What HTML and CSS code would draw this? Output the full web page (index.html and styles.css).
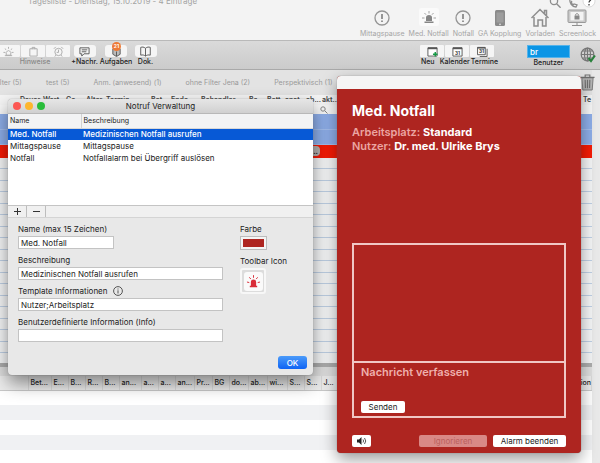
FILE: index.html
```html
<!DOCTYPE html>
<html lang="de">
<head>
<meta charset="utf-8">
<title>Tagesliste</title>
<link rel="stylesheet" href="styles.css">
</head>
<body>
<main class="app">
  <header class="top">
    <div class="top-line">
      <span class="top-title">Tagesliste - Dienstag, 15.10.2019 - 4 Einträge</span>
      <svg class="top-icons" viewBox="0 0 50 12" aria-hidden="true">
        <g fill="none" stroke="#8d8d8d" stroke-width="1.3"><circle cx="8" cy="5" r="3.6"/><path d="M10.6 7.8l4 4"/><path d="M24 2c-1 5 2 9 6 9l1-2-3-1-1 1c-1-1-2-3-1-4"/></g>
        <circle cx="43" cy="5" r="6" fill="#fff" stroke="#c4c4c4" stroke-width=".6"/>
        <path d="M41 3.500c0-3 4-3 4-.5 0 1.500-2 1.500-2 3.500M43 8v1.400" fill="none" stroke="#333" stroke-width="1.200"/>
      </svg>
    </div>
    <nav class="actions">
      <a href="#"><svg viewBox="0 0 20 20"><circle cx="10" cy="10" r="7" fill="none" stroke="#959595" stroke-width="1.300"/><path d="M10 6v5M10 12.500v1.500" stroke="#777" stroke-width="1.500"/></svg>Mittagspause</a>
      <a href="#"><svg viewBox="0 0 20 20"><rect x="0" y="0" width="20" height="18" rx="2" fill="#fafafa"/><path d="M7 13V9.500q0-2.500 3-2.500t3 2.500V13zM5.500 13.500h9v1.500h-9z" fill="#858585"/><path d="M10 3v2.500M5.500 5l1.500 1.700M14.500 5L13 6.700M3 10h2.500M14.500 10H17" stroke="#999" stroke-width=".9"/></svg>Med. Notfall</a>
      <a href="#"><svg viewBox="0 0 20 20"><circle cx="10" cy="10" r="7" fill="none" stroke="#959595" stroke-width="1.300"/><path d="M10 6v5M10 12.500v1.500" stroke="#777" stroke-width="1.500"/></svg>Notfall</a>
      <a href="#"><svg viewBox="0 0 20 20"><rect x="5" y="2" width="10" height="16" rx="1.500" fill="#8a8a8a"/><rect x="6.500" y="4.500" width="7" height="10" fill="#9d9d9d"/><circle cx="10" cy="16.300" r=".9" fill="#ddd"/></svg>GA Kopplung</a>
      <a href="#"><svg viewBox="0 0 20 20"><path d="M1.500 10L10 1.500 18.500 10M4 9v9h4v-6h4.500v6H16V9M14.500 5.500V2.500h2v5" fill="none" stroke="#8f8f8f" stroke-width="1.500"/></svg>Vorladen</a>
      <a href="#"><svg viewBox="0 0 20 20"><rect x="1" y="2" width="18" height="12.500" rx="1" fill="#c9c9c9" stroke="#999"/><rect x="3.500" y="4" width="13" height="8.500" fill="#f3f3f3"/><path d="M7.500 7.500h5v4h-5z" fill="#888"/><path d="M8.500 7.500V6.500q1.500-2 3 0v1M10 14.500v3M5 17.500h10" fill="none" stroke="#8f8f8f"/></svg>Screenlock</a>
    </nav>
  </header>

  <div class="toolbar">
    <div class="tool muted hints">
      <div class="segments">
        <button type="button" aria-label="Alarm"><svg viewBox="0 0 12 12"><path d="M3.500 10V7q2.500-4 5 0v3zM2 10.500h8M6 1v2M2 3l1.500 1M10 3L8.500 4M.5 7h2M9.500 7h2"/></svg></button><button type="button" aria-label="Klemmbrett"><svg viewBox="0 0 12 12"><path d="M2 3h8v8H2zM4.500 3.500v-2h3v2"/></svg></button><button type="button" aria-label="Wecker"><svg viewBox="0 0 12 12"><circle cx="6" cy="6.500" r="4"/><path d="M6 4v3H4M1 3l2-2M11 3L9 1M3 10l-1 1.500M9 10l1 1.500"/></svg></button>
      </div>
      <span>Hinweise</span>
    </div>
    <div class="tool msg"><button type="button" aria-label="Nachricht"><svg viewBox="0 0 12 12"><path d="M1 2h10v6.500H5.500L3 11V8.500H1zM3 4.200h6M3 6.300h5"/></svg></button><span>+Nachr.</span></div>
    <div class="tool tasks"><button type="button" aria-label="Aufgaben"><svg viewBox="0 0 12 12"><path d="M2 3v6l4 2.500L10 9V3M6 6v5" fill="#bbb"/></svg><b class="badge">21</b></button><span>Aufgaben</span></div>
    <div class="tool docs"><button type="button" aria-label="Dokumentation"><svg viewBox="0 0 12 12"><path d="M6 2.500C4 .8 2.500 1 .8 1.500v8.500c2-.5 3.500-.3 5.200 1 1.700-1.300 3.200-1.500 5.200-1V1.500C9.500 1 8 .8 6 2.500zV11"/></svg></button><span>Dok.</span></div>
    <div class="tool calendar">
      <div class="segments">
        <button type="button" aria-label="Neu"><svg viewBox="0 0 12 12"><path d="M1 2h10v9H1z" fill="#fff"/><path d="M1 2.500h10" stroke-width="2"/><path d="M9 6.500v5M6.500 9h5" stroke="#159b45" stroke-width="1.600"/></svg></button><button type="button" aria-label="Kalender"><svg viewBox="0 0 12 12"><path d="M1 2h10v9H1z" fill="#fff"/><path d="M1 2.500h10" stroke-width="2"/><text x="6" y="9.500">31</text></svg></button><button type="button" aria-label="Termine"><svg viewBox="0 0 12 12"><path d="M.5 1.500h8.500v8H.5zM11 3v8.500H3" fill="none"/><path d="M.5 2h8.500" stroke-width="1.600"/><text x="4.800" y="8">31</text></svg></button>
      </div>
      <div class="segment-labels"><span>Neu</span><span>Kalender</span><span>Termine</span></div>
    </div>
    <div class="tool user"><input id="user" type="text" value="br"><label for="user">Benutzer</label></div>
    <svg class="globe" viewBox="0 0 16 16"><g fill="none" stroke="#777" stroke-width="1.200"><circle cx="7.500" cy="7.500" r="6.300"/><ellipse cx="7.500" cy="7.500" rx="3" ry="6.300"/><path d="M1 7.500h13M7.500 1v13M2.500 4h10M2.500 11h10"/></g><path d="M8.500 11l2.500 3 4-5.500" fill="none" stroke="#26803a" stroke-width="2"/></svg>
  </div>

  <div class="workspace">
    <section class="tables">
      <nav class="filters"><a href="#">Filter (5)</a><a href="#">test (5)</a><a href="#">Anm. (anwesend) (1)</a><a href="#">ohne Filter Jena (2)</a><a href="#">Perspektivisch (1)</a></nav>
      <table class="day">
        <colgroup><col class="w18"><col class="w23"><col class="w23"><col class="w20"><col class="w20"><col class="w45"><col class="w20"><col class="w30"><col class="w48"><col class="w18"><col class="w18"><col class="w21"><col class="w16"><col><col class="w10"></colgroup>
        <thead><tr><th></th><th>Dauer</th><th>Wart</th><th>Ge...</th><th>Alter</th><th>Termin</th><th>Bet</th><th>Ende</th><th>Behandler</th><th>Be...</th><th>Bett</th><th>anst</th><th>ab...</th><th>akt...</th><th>Te</th></tr></thead>
        <tbody>
          <tr class="search"><td colspan="13"></td><td><svg viewBox="0 0 8 8"><circle cx="3" cy="3" r="2.200" fill="none" stroke="#888"/><path d="M4.800 4.800L7.500 7.500" stroke="#888"/></svg></td><td></td></tr>
          <tr class="blue"><td colspan="15"></td></tr>
          <tr class="blue"><td colspan="15"></td></tr>
          <tr class="red"><td colspan="13"><span class="more">...</span></td><td colspan="2"></td></tr>
        </tbody>
      </table>
      <div class="ruled"></div>
      <div class="splitter"></div>
      <table class="detail">
        <colgroup><col class="w28"><col class="w23"><col class="w17"><col class="w17"><col class="w17"><col class="w17"><col class="w22"><col class="w17"><col class="w17"><col class="w19"><col class="w18"><col class="w17"><col class="w19"><col class="w19"><col class="w20"><col class="w17"><col class="w17"><col class="w17"><col></colgroup>
        <thead><tr><th></th><th>Bet...</th><th>E...</th><th>B...</th><th>R...</th><th>B...</th><th>an...</th><th>a...</th><th>a...</th><th>an...</th><th>Pr...</th><th>BG</th><th>do...</th><th>ab...</th><th>wi...</th><th>S...</th><th>S...</th><th>J...</th><th class="end">ion</th></tr></thead>
        <tbody><tr><td colspan="19"></td></tr><tr><td colspan="19"></td></tr><tr><td colspan="19"></td></tr><tr><td colspan="19"></td></tr><tr><td colspan="19"></td></tr></tbody>
      </table>
    </section>
    <aside class="rail"></aside>
    <svg class="trash" viewBox="0 0 16 18"><path d="M2 4h12l-1 13H3z" fill="#b5b5b5" stroke="#777"/><path d="M.5 3.500h15M5.500 3V1h5v2M5.500 6l.3 9M8 6v9M10.500 6l-.3 9" fill="none" stroke="#6f6f6f" stroke-width="1.200"/></svg>
  </div>
</main>

<section class="window manager">
  <header class="titlebar"><span class="lights"><i class="close"></i><i class="minimize"></i><i class="maximize"></i></span><h2>Notruf Verwaltung</h2></header>
  <div class="list">
    <table>
      <colgroup><col class="w73"><col></colgroup>
      <thead><tr><th>Name</th><th>Beschreibung</th></tr></thead>
      <tbody>
        <tr class="selected"><td>Med. Notfall</td><td>Medizinischen Notfall ausrufen</td></tr>
        <tr><td>Mittagspause</td><td>Mittagspause</td></tr>
        <tr><td>Notfall</td><td>Notfallalarm bei Übergriff auslösen</td></tr>
      </tbody>
    </table>
  </div>
  <div class="list-actions">
    <button type="button" aria-label="Hinzufügen"><svg viewBox="0 0 9 9"><path d="M1 4.500h7M4.500 1v7"/></svg></button><button type="button" aria-label="Entfernen"><svg viewBox="0 0 9 9"><path d="M1 4.500h7"/></svg></button>
  </div>
  <form class="form">
    <div class="fields">
      <div class="field"><label for="name">Name (max 15 Zeichen)</label><input class="short" id="name" type="text" value="Med. Notfall"></div>
      <div class="field"><label for="desc">Beschreibung</label><input id="desc" type="text" value="Medizinischen Notfall ausrufen"></div>
      <div class="field"><label for="template">Template Informationen <svg class="info" viewBox="0 0 10 10"><circle cx="5" cy="5" r="4.400"/><path d="M5 4.300v3.200M5 2.500v1"/></svg></label><input id="template" type="text" value="Nutzer;Arbeitsplatz"></div>
      <div class="field"><label for="info">Benutzerdefinierte Information (Info)</label><input id="info" type="text"></div>
    </div>
    <div class="looks">
      <div class="field"><label for="color">Farbe</label><button class="swatch" id="color" type="button" aria-label="Farbe"><i></i></button></div>
      <div class="field"><label for="icon">Toolbar Icon</label><button class="icon-well" id="icon" type="button" aria-label="Toolbar Icon"><svg viewBox="0 0 18 18"><path d="M6.500 13V9.500q0-2.500 2.500-2.500t2.500 2.500V13zM5.500 13h7v1.500h-7z" fill="#d92c38"/><path d="M9 3v2.500M5 5l1.500 1.700M13 5l-1.500 1.700M2.800 9.500l2.200.5M15.200 9.500L13 10" stroke="#d92c38" stroke-width=".9"/></svg></button></div>
    </div>
    <div class="confirm"><button type="button">OK</button></div>
  </form>
</section>

<section class="window alarm">
  <header></header>
  <div class="alarm-body">
    <h1>Med. Notfall</h1>
    <p>Arbeitsplatz: <b>Standard</b></p>
    <p>Nutzer: <b>Dr. med. Ulrike Brys</b></p>
    <div class="chat">
      <div class="log"></div>
      <div class="compose"><h3>Nachricht verfassen</h3><button type="button">Senden</button></div>
    </div>
    <footer>
      <button class="sound" type="button" aria-label="Ton"><svg viewBox="0 0 12 10"><path d="M1 3.500h2L5.500 1v8L3 6.500H1z" fill="#222"/><path d="M7 3.500q1.200 1.500 0 3M8.500 2q2.500 3 0 6" fill="none" stroke="#444" stroke-width=".9"/></svg></button>
      <button class="ignore" type="button" disabled>Ignorieren</button>
      <button class="finish" type="button">Alarm beenden</button>
    </footer>
  </div>
</section>
</body>
</html>
```
FILE: styles.css
```css
* { box-sizing: border-box; }
html, body { height: 100%; }
body {
  margin: 0;
  overflow: hidden;
  position: relative;
  font: 8px/10px Inter, "Liberation Sans", sans-serif;
  color: #222;
  background: #fff;
}
button, input { font: inherit; color: inherit; margin: 0; padding: 0; border: 0; }
h1, h2, h3, p { margin: 0; }
a { color: inherit; text-decoration: none; }
svg { display: block; }
table { border-collapse: collapse; table-layout: fixed; width: 100%; }
th, td { padding: 0; text-align: left; font-weight: 500; white-space: nowrap; }

.w10 { width: 10px; } .w16 { width: 16px; } .w17 { width: 17px; } .w18 { width: 18px; }
.w19 { width: 19px; } .w20 { width: 20px; } .w21 { width: 21px; } .w22 { width: 22px; }
.w23 { width: 23px; } .w28 { width: 28px; } .w30 { width: 30px; } .w45 { width: 45px; }
.w48 { width: 48px; } .w73 { width: 73px; }

.app { height: 100%; display: flex; flex-direction: column; }
.top { height: 40px; flex: none; background: #f3f3f3; overflow: hidden; }
.top-line { display: flex; justify-content: space-between; height: 12px; margin-top: -4px; padding: 0 4px 0 28px; }
.top-title { line-height: 10px; color: #a3a3a3; }
.top-icons { width: 50px; height: 12px; }
.actions { display: flex; justify-content: flex-end; padding-right: 4px; gap: 4px; color: #a5a5a5; font-size: 7px; }
.actions a { display: flex; flex-direction: column; align-items: center; line-height: 12px; }
.actions svg { width: 20px; height: 20px; }

.toolbar {
  height: 30px; flex: none; display: flex; align-items: flex-start;
  padding: 4px 4px 0 0;
  background: linear-gradient(#dadada, #cbcbcb);
  border-top: 1px solid #b9b9b9; border-bottom: 1px solid #a9a9a9;
}
.tool { display: flex; flex-direction: column; align-items: center; line-height: 10px; font-size: 7px; font-weight: 500; flex: none; }
.tool button { position: relative; display: grid; place-items: center; width: 22px; height: 12px; border-radius: 3px; background: #f5f5f5; }
.tool svg { width: 11px; height: 11px; fill: none; stroke: #555; stroke-width: 1; }
.tool text { font-size: 5px; font-weight: 700; text-anchor: middle; fill: #333; stroke: none; }
.segments { display: flex; gap: 1px; }
.segments button { width: 24px; border-radius: 1px; }
.hints { width: 70px; align-items: flex-end; }
.hints > span { align-self: center; }
.muted { color: #888; }
.muted svg { stroke: #aaa; }
.msg { width: 29px; }
.tasks { width: 34px; }
.docs { width: 25px; }
.badge {
  position: absolute; top: -3px; left: 7px; width: 9px; height: 9px; border-radius: 50%;
  background: #ee7935; color: #fff; font-size: 5px; line-height: 9px; text-align: center;
}
.calendar { margin-left: auto; margin-right: 29px; }
.segment-labels { display: flex; gap: 1px; }
.segment-labels span:first-child { width: 22px; text-align: center; }
.user input { width: 43px; height: 13px; padding: 0 2px; background: #0b95e5; border: 1px solid #55b3ea; color: #fff; font-size: 8px; }
.user label { line-height: 9px; }
.globe { width: 16px; height: 16px; margin: 2px 0 0 10px; flex: none; }

.workspace { position: relative; flex: 1; min-height: 0; display: flex; }
.tables { flex: 1; min-width: 0; overflow: hidden; }
.rail { width: 8px; background: #e9e9e9; }
.trash { position: absolute; right: 5px; top: 4px; width: 15px; height: 17px; }
.filters { display: flex; gap: 24px; height: 25px; line-height: 25px; background: #e3e3e3; color: #999; font-size: 7px; white-space: nowrap; }
.filters a:first-child { margin-left: -6px; }
.day th { font-size: 7px; height: 10px; line-height: 9px; padding-left: 2px; background: #f4f4f4; font-weight: 600; color: #444; vertical-align: top; }
.day th:last-child { padding-left: 1px; }
.day tr { height: 15px; }
.day thead tr, .day .search { height: 9px; }
.day .search { background: #f7f7f7; }
.day .search svg { width: 8px; height: 8px; }
.day .blue { background: #8eaee9; border-bottom: 1px solid #a5bfee; }
.day .red { background: #f61b05; height: 14px; }
.more { display: block; margin-left: auto; width: 20px; border-radius: 4px; background: #b7b1ae; text-align: right; padding-right: 2px; }
.ruled { height: 205px; background: repeating-linear-gradient(#f5f6f7 0 10px, #bfd0e5 10px 11px, #f5f6f7 11px 22px, #bfd0e5 22px 23px); }
.splitter { height: 13px; background: #dedede; border-top: 4px solid #adadad; }
.detail th { height: 14px; font-size: 7px; line-height: 13px; padding-left: 2px; background: #ececec; border-bottom: 1px solid #c9c9c9; border-right: 1px solid #dadada; }
.detail .end { text-align: right; }
.detail td { height: 15px; }
.detail tbody tr { background: #fff; }
.detail tbody tr:nth-child(even) { background: #f0f1f3; }

.window { position: absolute; overflow: hidden; }
.manager { left: 8px; top: 99px; width: 305px; background: #e8e8e8; border-radius: 4px; box-shadow: 0 0 1px #777, 0 8px 18px rgba(0,0,0,.45); }
.titlebar { position: relative; height: 15px; background: linear-gradient(#e6e6e6, #d0d0d0); border-bottom: 1px solid #b8b8b8; }
.titlebar h2 { font-size: 8px; line-height: 15px; font-weight: 400; text-align: center; }
.lights { position: absolute; left: 5px; top: 3px; display: flex; gap: 4px; }
.lights i { width: 8px; height: 8px; border-radius: 50%; }
.close { background: #fc5753; } .minimize { background: #fdb62e; } .maximize { background: #29bd3a; }
.list { height: 91px; background: #fff; }
.list th { height: 14px; background: #f2f3f4; font-size: 7px; font-weight: 400; border-bottom: 1px solid #d7d7d7; }
.list th:first-child { border-right: 1px solid #d2d2d2; }
.list th, .list td { padding-left: 2px; }
.list td { height: 12px; font-weight: 400; line-height: 11px; }
.list .selected { background: #0759d6; color: #fff; }
.list .selected td { font-weight: 500; }
.list-actions { display: flex; height: 13px; background: #f0f0f0; border-top: 1px solid #c4c4c4; border-bottom: 1px solid #d4d4d4; }
.list-actions button { width: 19px; display: grid; place-items: center; background: none; border-right: 1px solid #bdbdbd; }
.list-actions svg { width: 9px; height: 9px; stroke: #333; stroke-width: 1; }
.form { display: grid; grid-template-columns: 205px 1fr; column-gap: 17px; padding: 6px 6px 6px 10px; }
.fields, .looks { display: flex; flex-direction: column; gap: 6px; }
.field { display: flex; flex-direction: column; align-items: flex-start; gap: 2px; }
.field label { display: flex; align-items: center; gap: 5px; line-height: 10px; height: 10px; white-space: nowrap; }
.field input { width: 100%; height: 13px; padding: 0 2px; background: #fff; border: 1px solid #c3c3c3; }
.field .short { width: 96px; }
.info { width: 10px; height: 10px; fill: none; stroke: #555; stroke-width: 1; }
.swatch { width: 27px; height: 14px; padding: 2px; border: 1px solid #bcbcbc; background: #f4f4f4; }
.swatch i { display: block; height: 8px; background: #ae2520; }
.icon-well { width: 26px; height: 26px; display: grid; place-items: center; border: 2px solid #f7f7f7; border-radius: 3px; background: #dcdcdc; }
.icon-well svg { width: 19px; height: 19px; background: #fafafa; border-radius: 3px; }
.confirm { grid-column: 1 / -1; display: flex; justify-content: flex-end; margin-top: 14px; }
.confirm button { width: 29px; height: 13px; border-radius: 3px; background: linear-gradient(#4b9bfa, #0e63f4); color: #fff; font-weight: 500; }

.alarm { left: 337px; top: 76px; width: 244px; border-radius: 4px; background: #ae2520; box-shadow: 0 0 1px #666, 0 6px 16px rgba(0,0,0,.4); }
.alarm > header { height: 13px; background: #f5f5f5; }
.alarm-body { padding: 13px 15px 6px; }
.alarm h1 { color: #fff; font-size: 14px; line-height: 18px; font-weight: 700; margin-bottom: 5px; }
.alarm p { color: #eba5a2; font-size: 11px; line-height: 14px; font-weight: 600; }
.alarm p b { color: #fff; font-weight: 700; }
.chat { margin-top: 90px; border: 2px solid #f1c7c5; }
.log { height: 118px; border-bottom: 2px solid #f1c7c5; }
.compose { padding: 2px 7px 3px; display: flex; flex-direction: column; align-items: flex-start; justify-content: space-between; height: 53px; }
.compose h3 { color: #efb0ad; font-size: 11px; line-height: 14px; font-weight: 600; }
.alarm button { height: 12px; border-radius: 2px; background: #fff; }
.compose button { width: 44px; }
.alarm footer { display: flex; gap: 6px; margin-top: 17px; }
.sound { width: 19px; display: grid; place-items: center; }
.sound svg { width: 12px; height: 10px; }
.alarm .ignore { width: 68px; margin-left: auto; background: #d98986; color: #b9615e; }
.finish { width: 73px; }
```
